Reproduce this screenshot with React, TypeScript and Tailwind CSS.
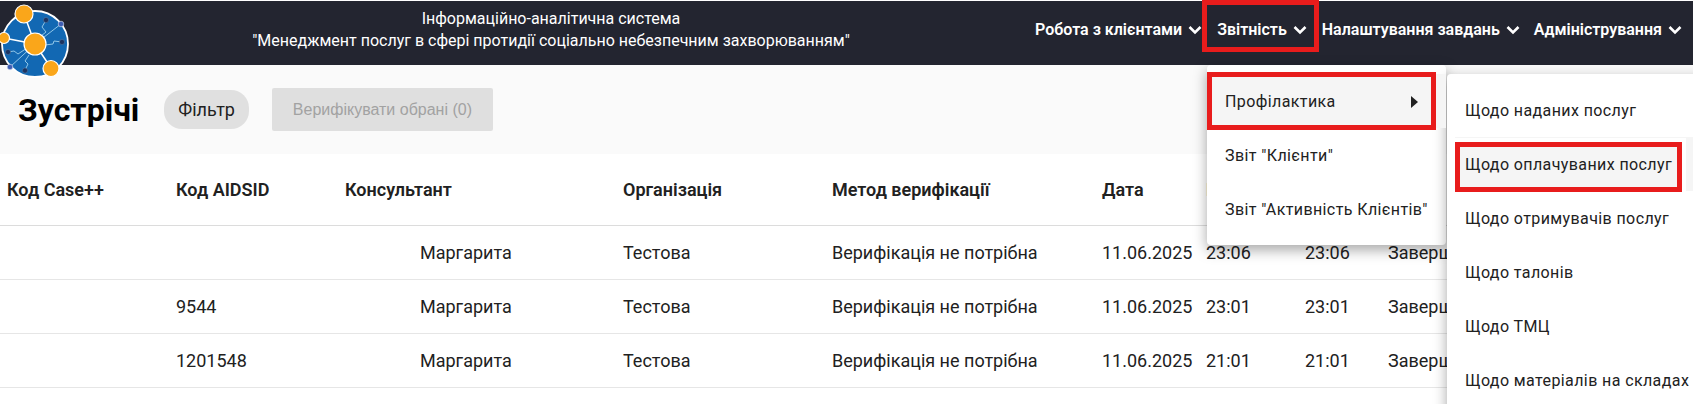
import React from "react";

type Meeting = {
  caseCode: string;
  aidsId: string;
  consultant: string;
  organization: string;
  method: string;
  date: string;
  start: string;
  end: string;
  status: string;
};

const meetings: Meeting[] = [
  {
    caseCode: "",
    aidsId: "",
    consultant: "Маргарита",
    organization: "Тестова",
    method: "Верифікація не потрібна",
    date: "11.06.2025",
    start: "23:06",
    end: "23:06",
    status: "Завершено",
  },
  {
    caseCode: "",
    aidsId: "9544",
    consultant: "Маргарита",
    organization: "Тестова",
    method: "Верифікація не потрібна",
    date: "11.06.2025",
    start: "23:01",
    end: "23:01",
    status: "Завершено",
  },
  {
    caseCode: "",
    aidsId: "1201548",
    consultant: "Маргарита",
    organization: "Тестова",
    method: "Верифікація не потрібна",
    date: "11.06.2025",
    start: "21:01",
    end: "21:01",
    status: "Завершено",
  },
];

const reportItems = ["Профілактика", 'Звіт "Клієнти"', 'Звіт "Активність Клієнтів"'];

const preventionItems = [
  "Щодо наданих послуг",
  "Щодо оплачуваних послуг",
  "Щодо отримувачів послуг",
  "Щодо талонів",
  "Щодо ТМЦ",
  "Щодо матеріалів на складах",
];

const Logo = () => (
  <svg viewBox="0 0 72 80" className="absolute left-0 -top-px w-[72px] h-20" aria-hidden="true">
    <circle cx="35" cy="44" r="33" fill="#1268b3" stroke="#fff" strokeWidth="1.8" />
    <g stroke="#fff" strokeWidth="1.5">
      <path d="M35 44 24 14M35 44 4 38M35 44 51 68" />
    </g>
    <g fill="none" stroke="#8fc6e8" strokeWidth="1">
      <path d="M35 44 61 24M35 44 10 67" />
      <path d="M46 20 42 27 46 32 41 36M62 42 54 41 53 44 45 45M8 52 14 51 18 54 27 48M25 70 28 64 25 61 29 55" />
    </g>
    <g fill="#faa61a" stroke="#fff" strokeWidth="1.2">
      <circle cx="35" cy="44" r="11" />
      <circle cx="24" cy="14" r="9" />
      <circle cx="4" cy="38" r="5.5" />
      <circle cx="51" cy="68.5" r="8" />
    </g>
    <g fill="#1c3461" stroke="#5b7fa8" strokeWidth=".5">
      <circle cx="46" cy="20" r="2.6" />
      <circle cx="62" cy="42" r="2.6" />
      <circle cx="8" cy="52" r="2.6" />
      <circle cx="25" cy="70.5" r="2.6" />
    </g>
    <g fill="#3f5fb5" stroke="#dce6f5" strokeWidth=".6">
      <circle cx="61" cy="24" r="2.8" />
      <circle cx="10" cy="67" r="2.8" />
    </g>
  </svg>
);

const Chevron = () => (
  <svg viewBox="0 0 14 10" className="w-[14px] h-[10px]" fill="none" aria-hidden="true">
    <path d="M1.5 2 7 7.5 12.5 2" stroke="currentColor" strokeWidth="2.6" />
  </svg>
);

const NavButton = ({ label, active = false }: { label: string; active?: boolean }) => (
  <button
    className={
      active
        ? "flex h-[52px] items-center gap-[6px] border-[5px] border-[#e81c1c] pl-[10px] pr-[7px] pt-2"
        : "flex items-center gap-[6px]"
    }
  >
    {label}
    <Chevron />
  </button>
);

const ReportMenu = () => (
  <div className="absolute left-[172px] top-16 z-10 flex items-start text-base font-normal tracking-wide text-[#212121]">
    <ul className="w-[239px] rounded bg-white py-[9px] shadow-[0_5px_14px_rgba(0,0,0,0.35)]">
      {reportItems.map((item, index) => (
        <li key={item} className={index === 0 ? "relative bg-[#f5f5f5]" : ""}>
          <button className="flex h-[54px] w-full items-center justify-between pt-0.5 pl-[18px] pr-7 whitespace-nowrap">
            {item}
            {index === 0 && (
              <svg viewBox="0 0 7 12" className="w-[7px] h-3" fill="currentColor" aria-hidden="true">
                <path d="M0 0 7 6 0 12z" />
              </svg>
            )}
          </button>
          {index === 0 && (
            <span className="pointer-events-none absolute -top-[2px] left-0 h-[58px] w-[229px] border-[5px] border-[#e81c1c]" />
          )}
        </li>
      ))}
    </ul>
    <ul className="ml-px mt-[9px] w-[260px] rounded bg-white py-[9px] shadow-[0_5px_14px_rgba(0,0,0,0.35)]">
      {preventionItems.map((item, index) => (
        <li
          key={item}
          className={index === 1 ? "relative border-l-8 border-white bg-[#f5f5f5]" : "border-l-8 border-white"}
        >
          <button className="flex h-[54px] w-full items-center pt-0.5 pl-[10px] whitespace-nowrap">{item}</button>
          {index === 1 && (
            <span className="pointer-events-none absolute top-[5px] left-0 h-[50px] w-[227px] border-[5px] border-[#e81c1c] ring-4 ring-white" />
          )}
        </li>
      ))}
    </ul>
  </div>
);

const Header = () => (
  <header className="relative mt-px flex h-16 items-start bg-[#232530] text-base text-white">
    <Logo />
    <div className="flex-1 pt-[7px] pl-[67px] text-center leading-[22px]">
      Інформаційно-аналітична система
      <br />
      "Менеджмент послуг в сфері протидії соціально небезпечним захворюванням"
    </div>
    <nav className="relative flex h-[58px] w-[658px] shrink-0 items-center font-semibold">
      <NavButton label="Робота з клієнтами" />
      <div className="-mt-2">
        <NavButton label="Звітність" active />
      </div>
      <div className="ml-[3px] flex gap-[14px]">
        <NavButton label="Налаштування завдань" />
        <NavButton label="Адміністрування" />
      </div>
      <ReportMenu />
    </nav>
  </header>
);

const Toolbar = () => (
  <div className="flex h-[89px] items-center bg-[#fafafa] pl-[18px]">
    <h1 className="text-[32px] font-bold text-black">Зустрічі</h1>
    <button className="ml-[25px] h-[39px] rounded-[18px] bg-[#e0e0e0] px-[14px] text-lg text-[#212121]">
      Фільтр
    </button>
    <button
      disabled
      className="ml-[23px] h-[43px] w-[221px] rounded-xs bg-[#dfdfdf] font-['Liberation_Sans',sans-serif] text-base text-[#a2a2a2]"
    >
      Верифікувати обрані (0)
    </button>
  </div>
);

const MeetingsTable = () => (
  <table className="w-full table-fixed text-left text-lg text-[#212121]">
    <colgroup>
      <col className="w-[169px]" />
      <col className="w-[169px]" />
      <col className="w-[278px]" />
      <col className="w-[209px]" />
      <col className="w-[270px]" />
      <col className="w-[104px]" />
      <col className="w-[99px]" />
      <col className="w-[83px]" />
      <col />
    </colgroup>
    <thead>
      <tr className="h-[71px] border-b border-[#dcdcdc] [&>th]:pt-0.5 [&>th]:pl-[7px] [&>th]:font-semibold [&>th]:whitespace-nowrap">
        <th>Код Case++</th>
        <th>Код AIDSID</th>
        <th>Консультант</th>
        <th>Організація</th>
        <th>Метод верифікації</th>
        <th>Дата</th>
        <th>Початок</th>
        <th>Кінець</th>
        <th>Статус</th>
      </tr>
    </thead>
    <tbody>
      {meetings.map((row, index) => (
        <tr
          key={index}
          className="h-[54px] border-b border-[#e6e6e6] [&>td]:pt-0.5 [&>td]:pl-[7px] [&>td]:whitespace-nowrap"
        >
          <td>{row.caseCode}</td>
          <td>{row.aidsId}</td>
          <td>
            <span className="pl-[75px]">{row.consultant}</span>
          </td>
          <td>{row.organization}</td>
          <td>{row.method}</td>
          <td>{row.date}</td>
          <td>{row.start}</td>
          <td>{row.end}</td>
          <td>{row.status}</td>
        </tr>
      ))}
    </tbody>
  </table>
);

const App = () => {
  return (
    <div className="h-screen overflow-hidden bg-white font-[Roboto,sans-serif]">
      <Header />
      <Toolbar />
      <MeetingsTable />
    </div>
  );
};

export default App;
